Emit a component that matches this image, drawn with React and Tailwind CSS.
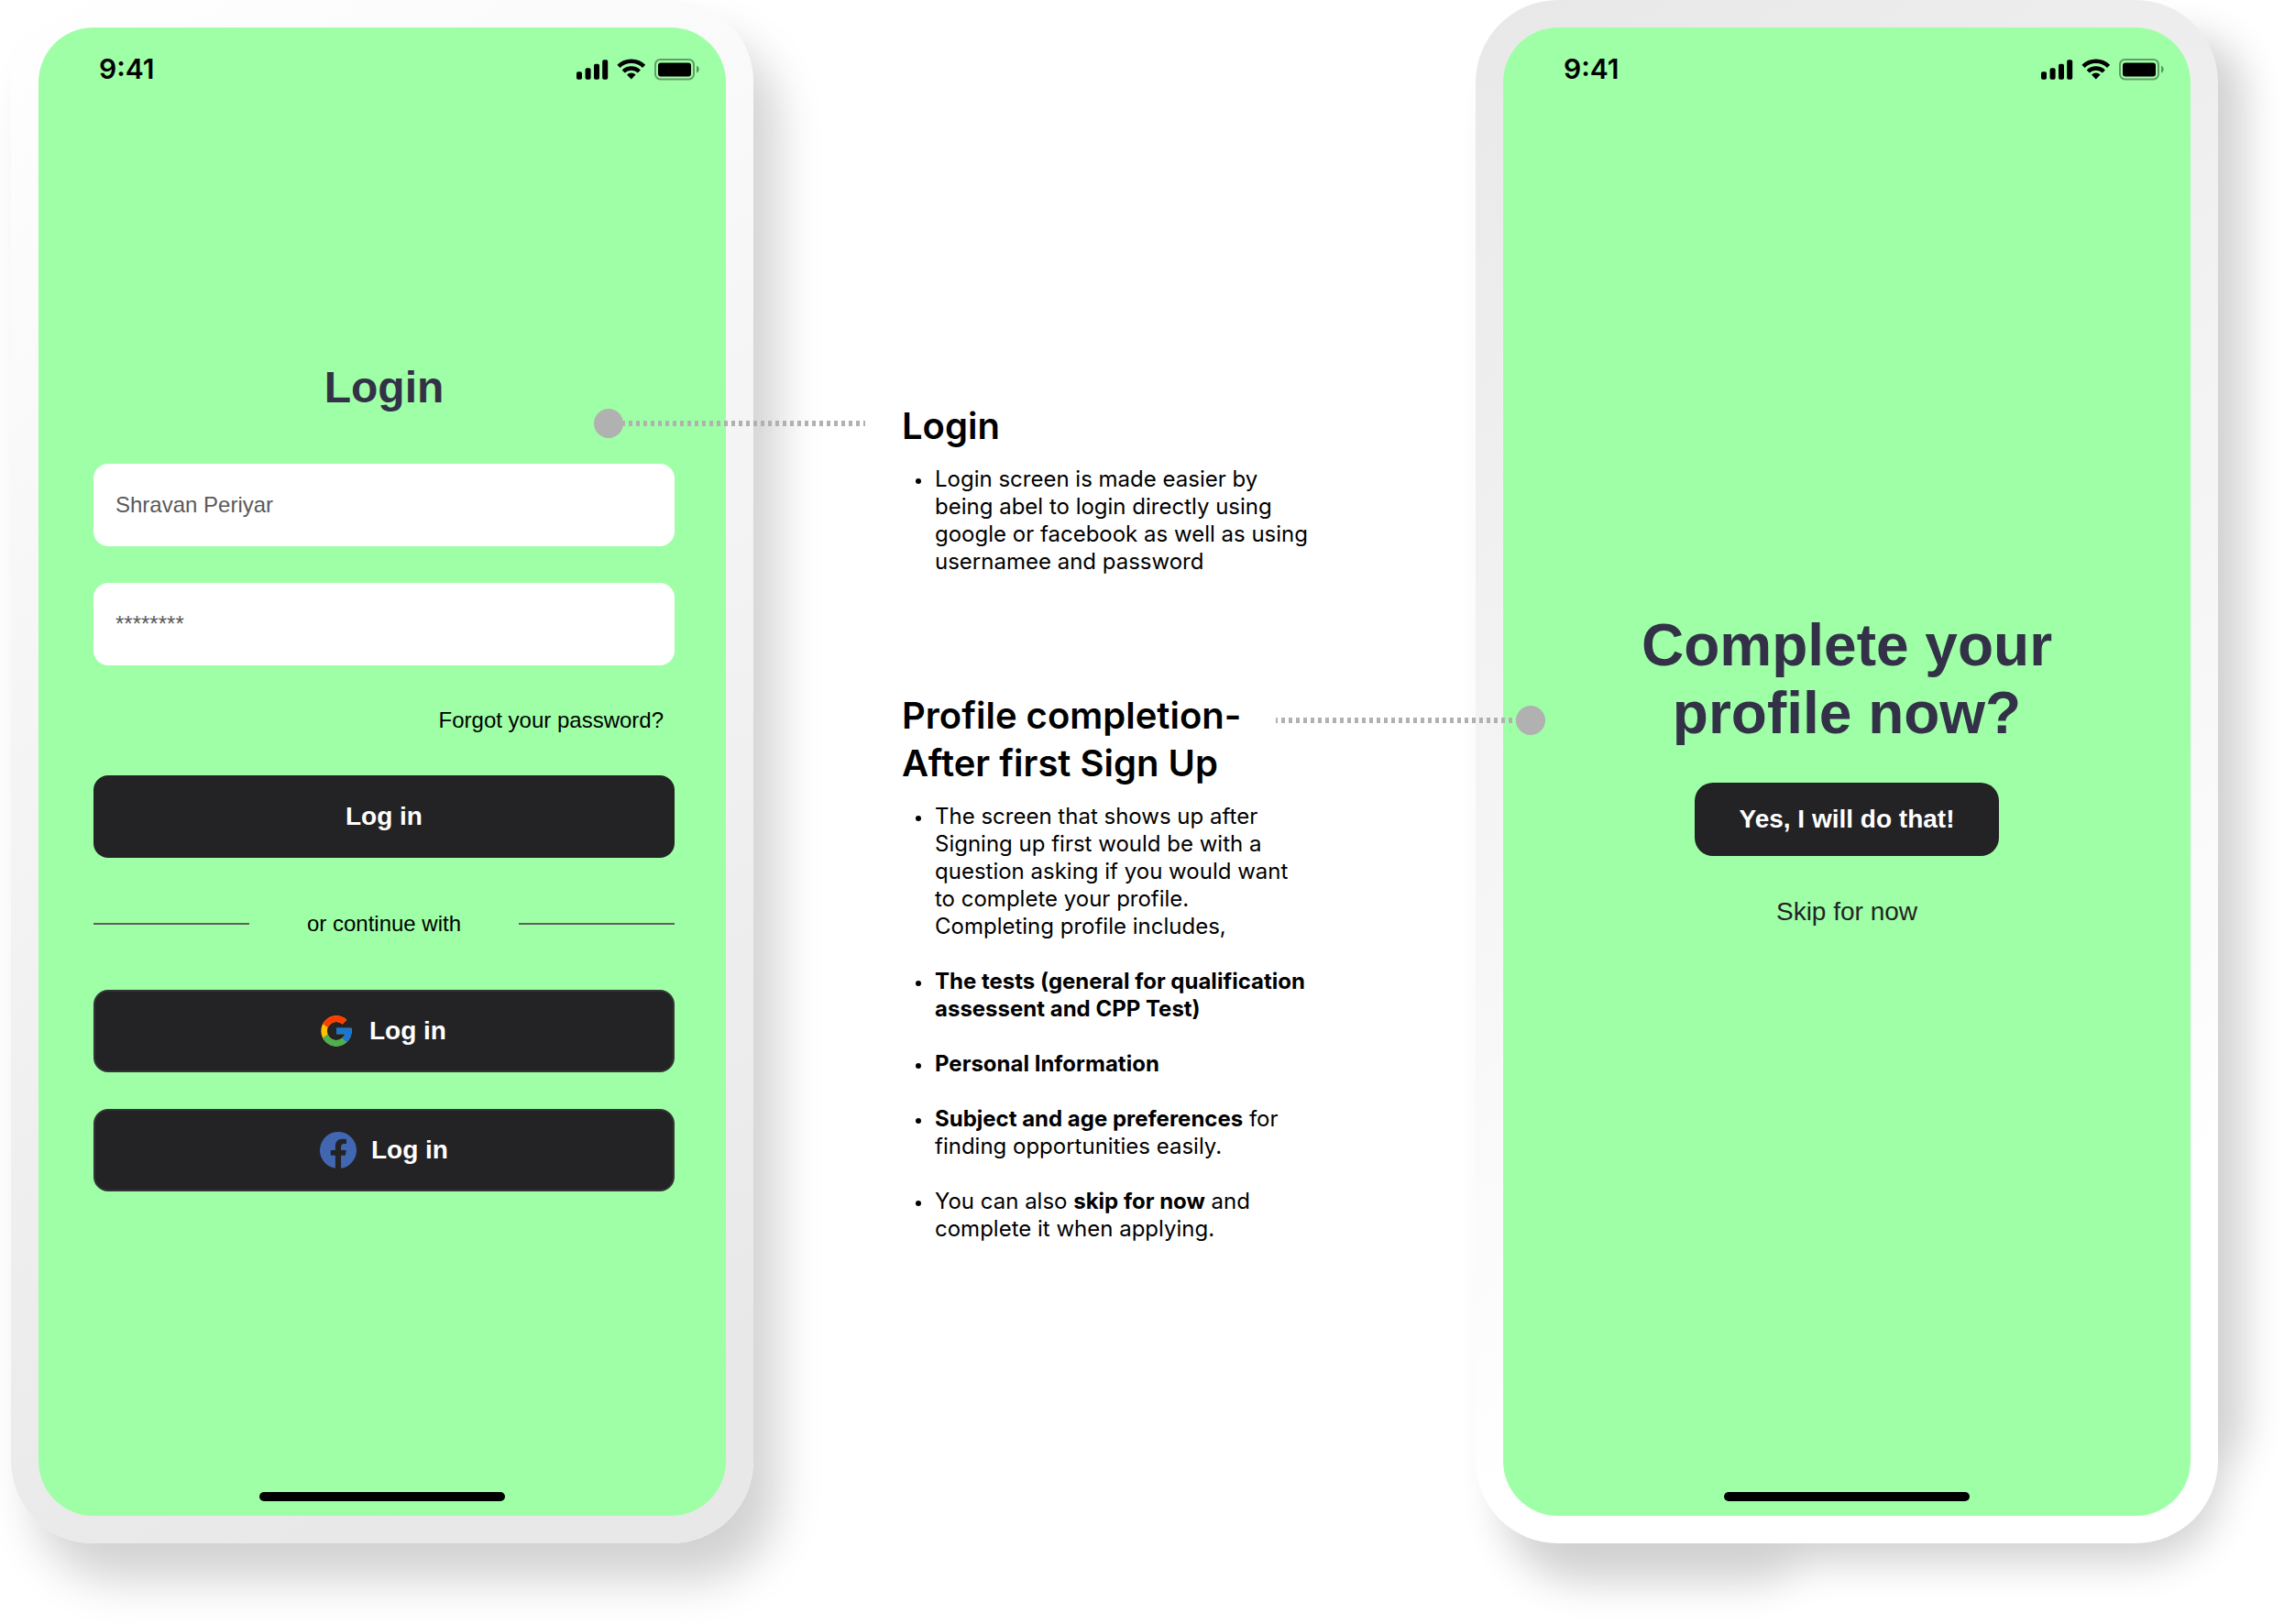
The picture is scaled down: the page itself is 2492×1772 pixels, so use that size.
import React from "react";
import { FcGoogle } from "react-icons/fc";

const cx = (...parts) => parts.filter(Boolean).join(" ");

function StatusIcons() {
  return (
    <svg width="135" height="26" viewBox="0 0 135 26" aria-hidden="true">
      <rect x="0" y="16.3" width="6" height="8.5" rx="1.8" />
      <rect x="9.6" y="12.3" width="6" height="12.5" rx="1.8" />
      <rect x="19" y="7.8" width="6" height="17" rx="1.8" />
      <rect x="28.2" y="3.3" width="6" height="21.5" rx="1.8" />
      <g fill="none" stroke="#000" strokeWidth="4.4">
        <path d="M46 10.4 A19.5 19.5 0 0 1 73.6 10.4" />
        <path d="M51.2 16 A12.2 12.2 0 0 1 68.4 16" />
      </g>
      <path d="M59.8 24.6 L55 19.6 A6.8 6.8 0 0 1 64.6 19.6 Z" />
      <rect x="86" y="3" width="42" height="21.4" rx="5.4" fill="none" stroke="#000" strokeOpacity="0.38" strokeWidth="2" />
      <rect x="89" y="6.6" width="36" height="14.8" rx="3" />
      <path d="M131 9.8 C134.6 11 134.6 16.4 131 17.6 Z" fillOpacity="0.42" />
    </svg>
  );
}

function FacebookMark() {
  return (
    <svg width="40" height="40" viewBox="0 0 40 40" aria-hidden="true">
      <path
        fill="#4267B2"
        d="M40 20 A20 20 0 1 0 16.9 39.8 V25.8 H11.8 V20 H16.9 V15.6 C16.9 10.6 19.9 7.8 24.5 7.8 C26.6 7.8 28.9 8.2 28.9 8.2 V13.1 H26.4 C23.9 13.1 23.1 14.7 23.1 16.3 V20 H28.7 L27.8 25.8 H23.1 V39.8 A20 20 0 0 0 40 20 Z"
      />
    </svg>
  );
}

function Connector({ className, dotAt }) {
  const dotX = dotAt === "left" ? 16 : 278;
  const from = dotAt === "left" ? 16 : 0;
  const length = dotAt === "left" ? 280 : 278;
  return (
    <svg className={cx("absolute z-20", className)} width="296" height="32" viewBox="0 0 296 32" aria-hidden="true">
      <line x1={from} x2={from + length} y1="16" y2="16" stroke="#b1b1b1" strokeWidth="6" strokeDasharray="4 4" strokeDashoffset="2" />
      <circle cx={dotX} cy="16" r="16" fill="#b1b1b1" />
    </svg>
  );
}

function Phone({ frameClass, connector, shadow, children }) {
  return (
    <div className="relative isolate w-[810px] shrink-0">
      {shadow}
      <div className={cx("rounded-[90px] p-[30px]", frameClass)}>
        <section className="flex min-h-[1624px] flex-col rounded-[60px] bg-[#9effa6]">
          <header className="flex items-center justify-between pt-[27px] pr-7 pl-[66px]">
            <span className="font-[Inter,sans-serif] text-[30px] leading-9 font-semibold">9:41</span>
            <StatusIcons />
          </header>
          {children}
          <div className="mx-auto mt-auto mb-4 h-[10px] w-[268px] rounded-full bg-black" />
        </section>
      </div>
      {connector}
    </div>
  );
}

function PrimaryButton({ className, children, ...rest }) {
  return (
    <button
      type="button"
      className={cx("flex items-center justify-center bg-[#232325] text-[28px] leading-8 font-bold text-white", className)}
      {...rest}
    >
      {children}
    </button>
  );
}

function LoginForm() {
  return (
    <form className="flex flex-col pt-[302px] pr-14 pl-[60px] text-2xl" onSubmit={(e) => e.preventDefault()}>
      <h1 className="text-center text-5xl leading-14 font-bold text-[#333147]">Login</h1>
      <div className="mt-[55px] flex flex-col gap-10">
        <input
          type="text"
          aria-label="Username"
          defaultValue="Shravan Periyar"
          className="h-[90px] w-full rounded-2xl bg-white px-6 text-[#5a5a5a] outline-none"
        />
        <input
          type="text"
          aria-label="Password"
          defaultValue="********"
          className="h-[90px] w-full rounded-2xl bg-white px-6 text-[#5a5a5a] outline-none"
        />
      </div>
      <a href="#forgot" className="mt-11 mr-3 self-end leading-8 text-black">
        Forgot your password?
      </a>
      <PrimaryButton className="mt-11 h-[90px] rounded-2xl">Log in</PrimaryButton>
      <div className="mt-14 flex items-center justify-between leading-8">
        <span className="h-[2px] w-[170px] bg-[#5f5f5f]" />
        <span>or continue with</span>
        <span className="h-[2px] w-[170px] bg-[#5f5f5f]" />
      </div>
      <div className="mt-14 flex flex-col gap-10">
        <PrimaryButton className="h-[90px] gap-4 rounded-2xl border-2 border-[#333335] pr-1">
          <FcGoogle size={40} aria-hidden="true" />
          Log in
        </PrimaryButton>
        <PrimaryButton className="h-[90px] gap-4 rounded-2xl border-2 border-[#333335]">
          <FacebookMark />
          Log in
        </PrimaryButton>
      </div>
    </form>
  );
}

function ProfilePrompt() {
  return (
    <div className="flex flex-col items-center pt-[574px]">
      <h1 className="text-center text-[64px] leading-[74px] font-bold text-[#333147]">
        Complete your
        <br />
        profile now?
      </h1>
      <PrimaryButton className="mt-[39px] h-20 min-w-[332px] rounded-[20px] px-12">Yes, I will do that!</PrimaryButton>
      <button type="button" className="mt-[45px] text-[28px] leading-8 text-[#232325]">
        Skip for now
      </button>
    </div>
  );
}

function NoteItem({ bold, lines }) {
  return (
    <li
      className={cx(
        "flex gap-[15px] pl-[15px] before:mt-[14px] before:size-[6px] before:shrink-0 before:rounded-full before:bg-black",
        bold && "font-bold"
      )}
    >
      <div className="whitespace-nowrap">
        {lines.map((line, i) => (
          <React.Fragment key={i}>
            {i > 0 && <br />}
            {line}
          </React.Fragment>
        ))}
      </div>
    </li>
  );
}

function Notes() {
  return (
    <div className="min-w-0 flex-1 pt-[439px] pl-[162px] font-[Inter,sans-serif] text-2xl leading-[30px] text-black">
      <h2 className="text-[40px] leading-[52px] font-semibold">Login</h2>
      <ul className="mt-[17px]">
        <NoteItem
          lines={[
            "Login screen is made easier by",
            "being abel to login directly using",
            "google or facebook as well as using",
            "usernamee and password",
          ]}
        />
      </ul>
      <h2 className="mt-[127px] text-[40px] leading-[52px] font-semibold whitespace-nowrap">
        Profile completion-
        <br />
        After first Sign Up
      </h2>
      <ul className="mt-[17px] flex flex-col gap-[30px]">
        <NoteItem
          lines={[
            "The screen that shows up after",
            "Signing up first would be with a",
            "question asking if you would want",
            "to complete your profile.",
            "Completing profile includes,",
          ]}
        />
        <NoteItem bold lines={["The tests (general for qualification", "assessent and CPP Test)"]} />
        <NoteItem bold lines={["Personal Information"]} />
        <NoteItem
          lines={[
            <>
              <b>Subject and age preferences</b> for
            </>,
            "finding opportunities easily.",
          ]}
        />
        <NoteItem
          lines={[
            <>
              You can also <b>skip for now</b> and
            </>,
            "complete it when applying.",
          ]}
        />
      </ul>
    </div>
  );
}

export default function App() {
  return (
    <main className="flex min-h-screen items-start overflow-hidden bg-white pr-[72px] pl-3 font-['Liberation_Sans',Arial,sans-serif] text-black">
      <Phone
        frameClass="bg-[linear-gradient(155deg,#ffffff_0%,#e8e8e8_90%)] shadow-[26px_40px_50px_rgba(0,0,0,0.18)]"
        connector={<Connector dotAt="left" className="top-[446px] left-[636px]" />}
      >
        <LoginForm />
      </Phone>
      <Notes />
      <Phone
        frameClass="bg-[linear-gradient(155deg,#e8e8e8_0%,#ffffff_80%)]"
        shadow={
          <div className="absolute inset-0 -z-10 opacity-18 blur-[22px]">
            <div className="absolute top-10 right-[-28px] bottom-[70px] left-[420px] rounded-[60px] bg-black" />
            <div className="absolute top-10 right-[420px] bottom-[-42px] left-[28px] rounded-[90px] bg-black" />
            <div className="absolute right-[-4px] bottom-[-20px] left-[200px] h-[600px] rounded-[90px] bg-black" />
          </div>
        }
        connector={<Connector dotAt="right" className="top-[770px] left-[-218px]" />}
      >
        <ProfilePrompt />
      </Phone>
    </main>
  );
}
